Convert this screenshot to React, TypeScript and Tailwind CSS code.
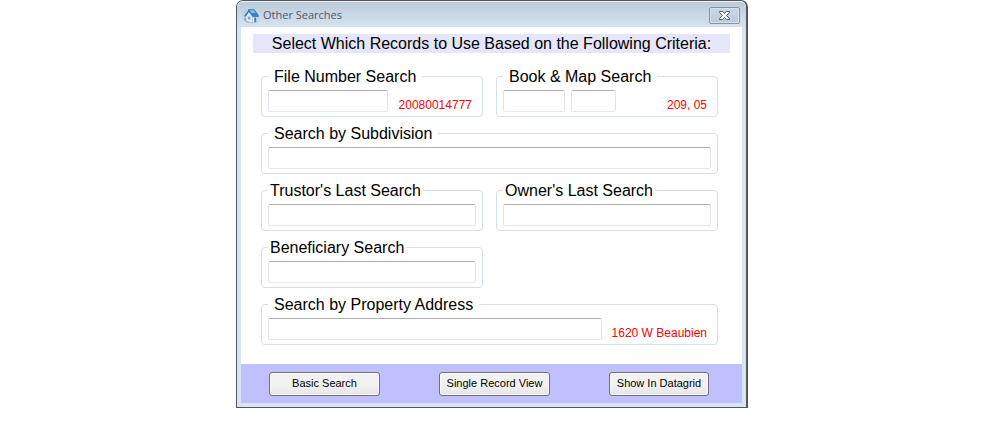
import type { ReactNode } from "react";
import clsx from "clsx";

interface GroupProps {
  title: string;
  htmlFor: string;
  wide?: boolean;
  className?: string;
  children: ReactNode;
}

function Group({ title, htmlFor, wide, className, children }: GroupProps) {
  return (
    <fieldset className={clsx("min-w-0 rounded-[4px] border border-[#d5dfe5] px-1.5 pb-1", className)}>
      <legend className={clsx("pt-px text-base leading-[18px] text-black", wide ? "px-1.5" : "px-0.5")}>
        <label htmlFor={htmlFor}>{title}</label>
      </legend>
      <div className="flex items-center gap-1.5 pt-1">{children}</div>
    </fieldset>
  );
}

function TextBox({ id, label, className }: { id: string; label?: string; className: string }) {
  return (
    <input
      id={id}
      type="text"
      aria-label={label}
      className={clsx(
        "h-[22px] min-w-0 rounded-[2px] border border-[#e2e3ea] border-t-[#abadb3] border-b-[#e3e9ef] bg-white px-1 text-xs outline-none focus:border-[#7eb4ea]",
        className,
      )}
    />
  );
}

function Hint({ children }: { children: ReactNode }) {
  return <span className="ml-auto shrink-0 pt-2 pr-1 pl-1 text-xs leading-[14px] text-[#ff0000]">{children}</span>;
}

function FormButton({ className, children }: { className: string; children: ReactNode }) {
  return (
    <button
      type="button"
      className={clsx(
        "h-6 rounded-[3px] border border-[#707070] bg-linear-to-b from-[#f2f2f2] from-50% to-[#e6e6e6] text-[11px] text-black shadow-[inset_0_0_0_1px_#fcfcfc] active:bg-[#d8e6f2]",
        className,
      )}
    >
      {children}
    </button>
  );
}

function HouseIcon() {
  return (
    <svg width="16" height="16" viewBox="0 0 16 16" aria-hidden="true">
      <path d="M.5 9.5C0 6 1.5 3 4.5 1.5L5 4 3.5 8l.5 5.5C2 13 .8 11.5.5 9.5Z" fill="#a8cfea" />
      <path d="M1 10.5c.5 2.5 3 4.3 5.5 4.2L4.2 10Z" fill="#5fa3d6" />
      <path d="M2.8 7.8 6.3 3.5 10 8v7L3 13.2Z" fill="#e4edf4" stroke="#9aabba" strokeWidth=".5" />
      <path d="M9.8 8.2h5v5.3L9.8 15Z" fill="#fdfdfe" stroke="#9aabba" strokeWidth=".5" />
      <path d="M5.6 1.6h5.6l4.5 6.2-.6 1H9.8L5.6 3.2Z" fill="#2f86cc" stroke="#1f619f" strokeWidth=".5" />
      <path d="M6.6 2.2h4.2L12.6 5H8.5Z" fill="#86c3ec" />
      <path d="M1.2 8 5.8 1.9l1 .9L2.5 8.8Z" fill="#2f76b5" />
      <path d="M4.8 8.5h2.6v3.2l-2.6-.4Z" fill="#86a9c5" />
      <path d="M11.2 9.6h2.2v4.2l-2.2.6Z" fill="#3c82bb" />
    </svg>
  );
}

function CloseIcon() {
  return (
    <svg width="13" height="11" viewBox="0 0 13 11" aria-hidden="true">
      <path
        d="M1.5 1.5h3.2l1.8 2 1.8-2h3.2v1L8.6 5.5l2.9 3v1H8.3l-1.8-2-1.8 2H1.5v-1l2.9-3-2.9-3Z"
        fill="#f8fafc"
        stroke="#535b68"
        strokeLinejoin="round"
      />
    </svg>
  );
}

export default function App() {
  return (
    <main className="flex justify-center pr-4 font-['Liberation_Sans',Arial,sans-serif]">
      <section className="w-full max-w-[512px] rounded-t-[7px] border border-r-2 border-[#54565a] bg-[#d7e4f2] px-1 pb-1">
        <header className="-mx-1 flex h-[26px] items-center rounded-t-[6px] border-t border-[#e9f0f7] bg-linear-to-b from-[#bccada] to-[#d5e2f0] px-1.5 pt-0.5">
          <HouseIcon />
          <h1 className="ml-1 font-['Open_Sans','Noto_Sans',sans-serif] text-[11px] text-[#4b5968]">Other Searches</h1>
          <button
            type="button"
            aria-label="Close"
            className="ml-auto flex h-[17px] w-[31px] items-center justify-center rounded-[2px] border border-[#8793a3] bg-linear-to-b from-[#c9d6e4] to-[#bccbdc] shadow-[inset_0_0_0_1px_#d6e1ed]"
          >
            <CloseIcon />
          </button>
        </header>

        <form className="bg-white">
          <div className="px-3 pt-[7px]">
            <h2 className="bg-[#e6e6fa] text-center text-base leading-[19px] text-black">
              Select Which Records to Use Based on the Following Criteria:
            </h2>
          </div>

          <div className="grid grid-cols-2 gap-x-[13px] gap-y-[7px] pt-[14px] pr-6 pb-[19px] pl-5">
            <Group title="File Number Search" htmlFor="file" wide>
              <TextBox id="file" className="w-[120px]" />
              <Hint>20080014777</Hint>
            </Group>
            <Group title="Book & Map Search" htmlFor="book" wide>
              <TextBox id="book" className="w-[62px]" />
              <TextBox id="map" label="Map" className="w-[45px]" />
              <Hint>209, 05</Hint>
            </Group>
            <Group title="Search by Subdivision" htmlFor="subdivision" wide className="col-span-2">
              <TextBox id="subdivision" className="flex-1" />
            </Group>
            <Group title="Trustor's Last Search" htmlFor="trustor">
              <TextBox id="trustor" className="flex-1" />
            </Group>
            <Group title="Owner's Last Search" htmlFor="owner">
              <TextBox id="owner" className="flex-1" />
            </Group>
            <Group title="Beneficiary Search" htmlFor="beneficiary" className="col-start-1">
              <TextBox id="beneficiary" className="flex-1" />
            </Group>
            <Group title="Search by Property Address" htmlFor="address" wide className="col-span-2">
              <TextBox id="address" className="flex-1" />
              <Hint>1620 W Beaubien</Hint>
            </Group>
          </div>

          <footer className="flex h-[39px] items-center justify-between bg-[#c0c0ff] pr-[33px] pl-7">
            <FormButton className="w-[111px]">Basic Search</FormButton>
            <FormButton className="w-[111px]">Single Record View</FormButton>
            <FormButton className="w-[100px]">Show In Datagrid</FormButton>
          </footer>
        </form>
      </section>
    </main>
  );
}
